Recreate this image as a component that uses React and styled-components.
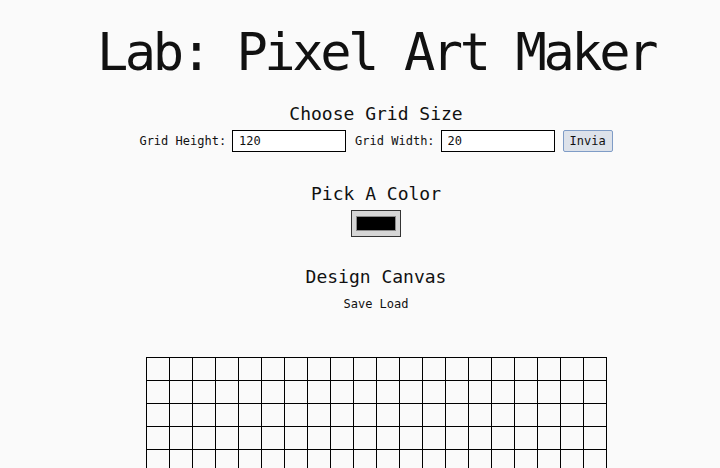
import React from 'react';
import styled, { createGlobalStyle } from 'styled-components';

const GlobalStyle = createGlobalStyle`
  html, body {
    margin: 0;
    padding: 0;
    background: #fafafa;
  }
  body {
    font-family: "DejaVu Sans Mono", "Liberation Mono", monospace;
    color: #111;
  }
`;

const Page = styled.div`
  display: flex;
  flex-direction: column;
  align-items: center;
  padding: 26px 0 0 32px;
  text-align: center;
`;

const Title = styled.h1`
  margin: 0 0 25px;
  font-size: 52px;
  line-height: 52px;
  font-weight: normal;
  letter-spacing: -3.4px;
  white-space: nowrap;
`;

const Heading = styled.h2`
  margin: ${props => props.$top || 0}px 0 0;
  font-size: 18px;
  line-height: 21.6px;
  font-weight: normal;
  white-space: nowrap;
`;

const SizeForm = styled.form`
  display: flex;
  align-items: center;
  margin-top: 5px;
  font-size: 12px;
`;

const Label = styled.label`
  margin: 0 6px 0 ${props => (props.$first ? 0 : 9)}px;
  white-space: nowrap;
`;

const NumberInput = styled.input`
  box-sizing: border-box;
  width: 114px;
  height: 22px;
  padding: 1px 6px;
  border: 1px solid #000;
  border-radius: 0;
  background: #fff;
  font-family: inherit;
  font-size: 12px;
  color: #111;
  outline: none;
`;

const SubmitButton = styled.button`
  box-sizing: border-box;
  width: 50px;
  height: 22px;
  margin-left: 8px;
  padding: 0;
  border: 1px solid #7f9cc6;
  border-radius: 2px;
  background: #dde2ea;
  font-family: inherit;
  font-size: 12px;
  color: #111;
`;

const ColorInput = styled.input`
  box-sizing: border-box;
  width: 50px;
  height: 27px;
  margin-top: 6px;
  padding: 0;
  border: 1px solid #333;
  border-radius: 0;
  background: #d6d6d6;

  &::-webkit-color-swatch-wrapper {
    padding: 5px 4px;
  }
  &::-webkit-color-swatch {
    border: 1px solid #8a8a8a;
    border-radius: 0;
  }
`;

const Links = styled.div`
  margin-top: 9px;
  font-size: 12px;
  line-height: 14.4px;
`;

const Canvas = styled.table`
  margin-top: 46px;
  border-collapse: collapse;
`;

const Cell = styled.td`
  box-sizing: border-box;
  width: 23px;
  height: 23px;
  padding: 0;
  border: 1px solid #000;
`;

const ROWS = 120;
const COLS = 20;

export default function App() {
  return (
    <>
      <GlobalStyle />
      <Page>
        <Title>Lab: Pixel Art Maker</Title>

        <Heading>Choose Grid Size</Heading>
        <SizeForm onSubmit={e => e.preventDefault()}>
          <Label $first htmlFor="inputHeight">Grid Height:</Label>
          <NumberInput id="inputHeight" type="text" defaultValue="120" />
          <Label htmlFor="inputWidth">Grid Width:</Label>
          <NumberInput id="inputWidth" type="text" defaultValue="20" />
          <SubmitButton type="submit">Invia</SubmitButton>
        </SizeForm>

        <Heading $top={31}>Pick A Color</Heading>
        <ColorInput type="color" defaultValue="#000000" />

        <Heading $top={29}>Design Canvas</Heading>
        <Links>Save Load</Links>

        <Canvas>
          <tbody>
            {Array.from({ length: ROWS }, (_, r) => (
              <tr key={r}>
                {Array.from({ length: COLS }, (_, c) => (
                  <Cell key={c} />
                ))}
              </tr>
            ))}
          </tbody>
        </Canvas>
      </Page>
    </>
  );
}
